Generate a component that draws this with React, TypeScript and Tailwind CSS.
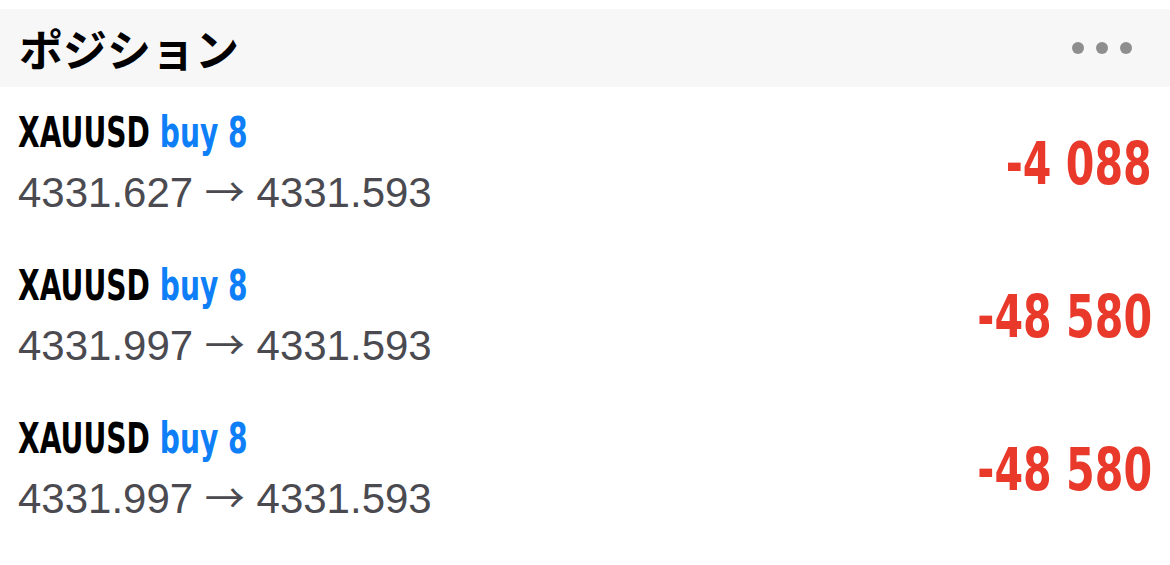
import React from "react";

const rows = [
  { from: "4331.627", to: "4331.593", pl: "-4 088" },
  { from: "4331.997", to: "4331.593", pl: "-48 580" },
  { from: "4331.997", to: "4331.593", pl: "-48 580" },
];

const cond = { fontFamily: '"DejaVu Sans", sans-serif' } as const;

export default function App() {
  return (
    <div className="w-[1170px] h-[565px] bg-white pt-[9px] overflow-hidden">
      <div className="h-[78px] bg-[#f7f7f7] flex items-center justify-between pl-[19px] pr-[38px]">
        <div className="text-[44px] font-bold text-black leading-none" style={{ fontFamily: '"Noto Sans CJK JP", sans-serif' }}>
          ポジション
        </div>
        <div className="flex gap-[12px]">
          <span className="w-[12px] h-[12px] rounded-full bg-[#8e8e8e]" />
          <span className="w-[12px] h-[12px] rounded-full bg-[#8e8e8e]" />
          <span className="w-[12px] h-[12px] rounded-full bg-[#8e8e8e]" />
        </div>
      </div>
      {rows.map((r, i) => (
        <div key={i} className="h-[153px] flex items-center justify-between pl-[18px] pr-[18px]">
          <div className="flex flex-col gap-[16px]">
            <div className="text-[42px] font-bold leading-none whitespace-nowrap origin-left scale-x-[0.67] -mt-[2px]" style={cond}>
              <span className="text-black">XAUUSD</span> <span className="text-[#0f7ff8]">buy 8</span>
            </div>
            <div className="text-[42px] leading-none text-[#4a4a50] whitespace-nowrap" style={{ fontFamily: '"Liberation Sans", Arial, sans-serif' }}>
              {r.from}{" "}
              <span style={{ fontFamily: '"Noto Sans CJK JP", sans-serif' }} className="text-[40px]">→</span>{" "}
              {r.to}
            </div>
          </div>
          <div className="text-[58px] font-bold text-[#e8392b] leading-none whitespace-nowrap origin-right scale-x-[0.71]" style={cond}>
            {r.pl}
          </div>
        </div>
      ))}
    </div>
  );
}
